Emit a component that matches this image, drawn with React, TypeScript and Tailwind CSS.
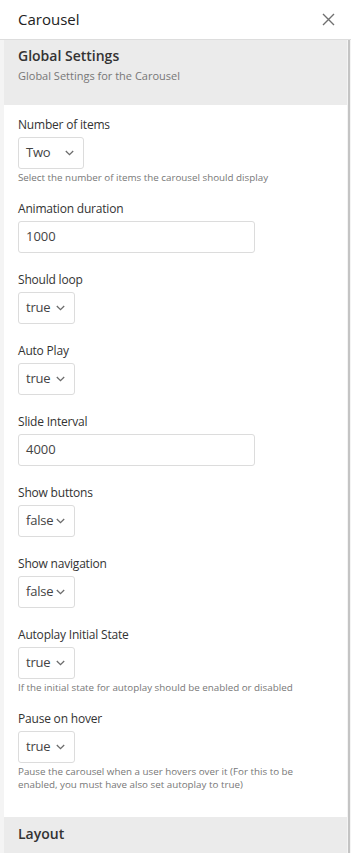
import React from 'react';

interface Field {
  label: string;
  kind: 'select' | 'input';
  value: string;
  width?: string;
  help?: string;
}

const FIELDS: Field[] = [
  { label: 'Number of items', kind: 'select', value: 'Two', width: 'w-[66px]', help: 'Select the number of items the carousel should display' },
  { label: 'Animation duration', kind: 'input', value: '1000' },
  { label: 'Should loop', kind: 'select', value: 'true' },
  { label: 'Auto Play', kind: 'select', value: 'true' },
  { label: 'Slide Interval', kind: 'input', value: '4000' },
  { label: 'Show buttons', kind: 'select', value: 'false' },
  { label: 'Show navigation', kind: 'select', value: 'false' },
  { label: 'Autoplay Initial State', kind: 'select', value: 'true', help: 'If the initial state for autoplay should be enabled or disabled' },
  { label: 'Pause on hover', kind: 'select', value: 'true', help: 'Pause the carousel when a user hovers over it (For this to be enabled, you must have also set autoplay to true)' },
];

const Chevron = () => (
  <svg width="9" height="6" viewBox="0 0 9 6" fill="none">
    <path d="M0.8 1l3.7 3.6L8.2 1" stroke="#6b6b6b" strokeWidth="1.3" />
  </svg>
);

const FieldRow: React.FC<{ field: Field }> = ({ field }) => {
  return (
    <div className={field.help ? 'mb-[17px]' : 'mb-[19px]'}>
      <div className="text-[12px] leading-[16px] text-[#333] tracking-[-0.2px]">{field.label}</div>
      {field.kind === 'select' ? (
        <div
          className={`mt-1 h-8 ${field.width || 'w-[57px]'} border border-[#dcdcdc] rounded-[3px] bg-white flex items-center justify-between pl-[7px] pr-[9px] text-[13px] tracking-[-0.2px] text-[#444]`}
        >
          <span>{field.value}</span>
          <Chevron />
        </div>
      ) : (
        <div className="mt-1 h-8 w-[237px] border border-[#dcdcdc] rounded-[3px] bg-white flex items-center pl-[7px] text-[13px] text-[#444]">
          {field.value}
        </div>
      )}
      {field.help && (
        <div className="mt-[2px] text-[9.8px] leading-[13px] text-[#777] pr-6">{field.help}</div>
      )}
    </div>
  );
};

export default function App() {
  return (
    <div className="w-[351px] h-[853px] overflow-hidden bg-white flex flex-col" style={{ fontFamily: '"Open Sans", "Liberation Sans", sans-serif' }}>
      {/* header */}
      <div className="h-10 shrink-0 flex items-center justify-between pl-[18px] pr-[16px] border-b border-[#dddddd]">
        <span className="text-[15px] text-[#222]">Carousel</span>
        <svg width="13" height="13" viewBox="0 0 13 13">
          <path d="M1 1l11 11M12 1L1 12" stroke="#707070" strokeWidth="1.4" />
        </svg>
      </div>

      <div className="flex flex-1 min-h-0">
        <div className="w-[4px] bg-[#f4f4f4]" />
        <div className="flex-1 flex flex-col">
          <div className="h-[65px] bg-[#ebebeb] pl-[14px] pt-[6px]">
            <div className="text-[14px] font-semibold text-[#333] leading-[20px]">Global Settings</div>
            <div className="text-[11px] text-[#777] leading-[16px] mt-[2px]">Global Settings for the Carousel</div>
          </div>
          <div className="pl-[14px] pt-3 pb-[9px]">
            {FIELDS.map((f) => (
              <FieldRow key={f.label} field={f} />
            ))}
          </div>
          <div className="flex-1 bg-[#ebebeb] pl-[14px] pt-[7px]">
            <div className="text-[14px] font-semibold text-[#333] leading-[20px]">Layout</div>
          </div>
        </div>
        <div className="w-[4px] bg-[#f4f4f4] flex">
          <div className="ml-[1px] w-[2px] bg-[#c4c4c4]" />
        </div>
      </div>
    </div>
  );
}
